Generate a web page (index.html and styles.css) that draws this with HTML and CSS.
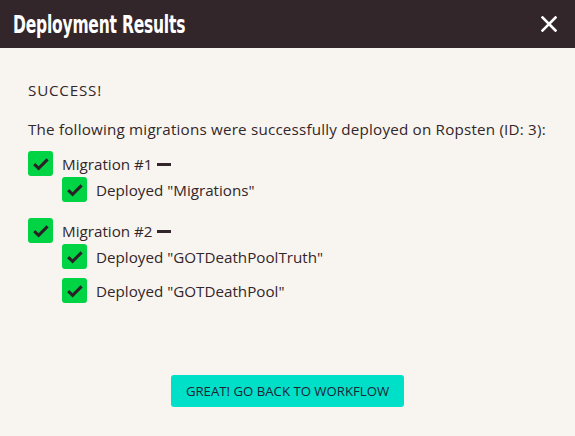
FILE: index.html
```html
<!DOCTYPE html>
<html>
<head>
<meta charset="utf-8">
<link rel="stylesheet" href="styles.css">
</head>
<body>
<div class="modal">
  <header class="header">
    <h1 class="title">Deployment Results</h1>
    <svg class="close" width="16" height="16" viewBox="0 0 16 16"><path d="M1.5 1.5 L14.5 14.5 M14.5 1.5 L1.5 14.5" stroke="#fff" stroke-width="2.6" stroke-linecap="square"/></svg>
  </header>
  <main class="content">
    <p class="success">SUCCESS!</p>
    <p class="intro">The following migrations were successfully deployed on Ropsten (ID: 3):</p>
    <ul class="migrations">
      <li class="migration">
        <div class="row"><span class="check"><svg width="18" height="18" viewBox="0 0 18 18"><path d="M2.2 9.2 L6.6 13.4 L15.6 4.4" fill="none" stroke="#2a2126" stroke-width="3"/></svg></span><span>Migration #1</span><span class="dash"></span></div>
        <ul class="contracts">
          <li class="row"><span class="check"><svg width="18" height="18" viewBox="0 0 18 18"><path d="M2.2 9.2 L6.6 13.4 L15.6 4.4" fill="none" stroke="#2a2126" stroke-width="3"/></svg></span><span>Deployed "Migrations"</span></li>
        </ul>
      </li>
      <li class="migration">
        <div class="row"><span class="check"><svg width="18" height="18" viewBox="0 0 18 18"><path d="M2.2 9.2 L6.6 13.4 L15.6 4.4" fill="none" stroke="#2a2126" stroke-width="3"/></svg></span><span>Migration #2</span><span class="dash"></span></div>
        <ul class="contracts">
          <li class="row"><span class="check"><svg width="18" height="18" viewBox="0 0 18 18"><path d="M2.2 9.2 L6.6 13.4 L15.6 4.4" fill="none" stroke="#2a2126" stroke-width="3"/></svg></span><span>Deployed "GOTDeathPoolTruth"</span></li>
          <li class="row"><span class="check"><svg width="18" height="18" viewBox="0 0 18 18"><path d="M2.2 9.2 L6.6 13.4 L15.6 4.4" fill="none" stroke="#2a2126" stroke-width="3"/></svg></span><span>Deployed "GOTDeathPool"</span></li>
        </ul>
      </li>
    </ul>
    <div class="actions">
      <button class="btn">GREAT! GO BACK TO WORKFLOW</button>
    </div>
  </main>
</div>
</body>
</html>
```
FILE: styles.css
```css
* { box-sizing: border-box; }
html, body { margin: 0; padding: 0; }
body {
  width: 575px;
  height: 436px;
  background: #f8f5f0;
  font-family: "Open Sans", "Noto Sans", sans-serif;
  color: #33262a;
  overflow: hidden;
}
.modal { display: flex; flex-direction: column; height: 436px; }
.header {
  height: 48px;
  background: #33262a;
  display: flex;
  align-items: center;
  justify-content: space-between;
  padding: 0 18px 0 13px;
}
.title {
  margin: 0;
  color: #fff;
  font-family: "DejaVu Sans", sans-serif;
  font-stretch: condensed;
  font-weight: bold;
  font-size: 25px;
  letter-spacing: -0.3px;
  transform: scaleX(0.69);
  transform-origin: left center;
  white-space: nowrap;
}
.close { display: block; }
.content {
  flex: 1;
  padding: 20px 28px 0 28px;
  font-size: 15.2px;
}
.success { margin: 12px 0 0 0; line-height: 20px; letter-spacing: 0.8px; }
.intro { margin: 19px 0 0 0; line-height: 20px; letter-spacing: 0.2px; }
.migrations { list-style: none; margin: 12px 0 0 0; padding: 0; }
.migration { margin-bottom: 16px; }
.contracts { list-style: none; margin: 1px 0 0 34px; padding: 0; }
.contracts .row { margin-bottom: 9px; }
.row { display: flex; align-items: center; height: 25px; }
.check {
  width: 25px; height: 25px;
  background: #00d445;
  border-radius: 3px;
  display: flex; align-items: center; justify-content: center;
  margin-right: 9px;
  flex: none;
}
.check svg { display: block; }
.dash {
  display: inline-block;
  width: 14px; height: 3px;
  background: #33262a;
  margin-left: 4px;
  margin-top: 1px;
}
.actions { display: flex; justify-content: center; margin-top: 72px; }
.btn {
  background: #00dfc8;
  border: none;
  border-radius: 3px;
  height: 32px;
  width: 233px;
  font-family: "Open Sans", "Noto Sans", sans-serif;
  font-size: 13.2px;
  color: #1f2235;
  padding: 0;
}
```
